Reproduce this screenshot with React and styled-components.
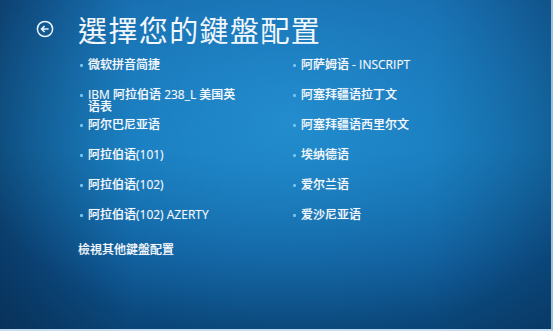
import styled, { createGlobalStyle } from 'styled-components';

const GlobalStyle = createGlobalStyle`
  html, body {
    margin: 0;
    padding: 0;
    background: #0c4a7c;
  }
  * {
    box-sizing: border-box;
  }
`;

const leftItems = [
  '微软拼音简捷',
  'IBM 阿拉伯语 238_L 美国英语表',
  '阿尔巴尼亚语',
  '阿拉伯语(101)',
  '阿拉伯语(102)',
  '阿拉伯语(102) AZERTY',
];

const rightItems = [
  '阿萨姆语 - INSCRIPT',
  '阿塞拜疆语拉丁文',
  '阿塞拜疆语西里尔文',
  '埃纳德语',
  '爱尔兰语',
  '爱沙尼亚语',
];

const App = () => {
  return (
    <>
      <GlobalStyle />
      <Screen>
        <Header>
          <BackButton aria-label="返回">
            <svg width="18" height="18" viewBox="0 0 18 18">
              <circle cx="9" cy="9" r="7.6" fill="none" stroke="#e8f2fa" strokeWidth="1.5" />
              <path d="M12.6 9 H5.6 M8.6 6 L5.6 9 L8.6 12" fill="none" stroke="#e8f2fa" strokeWidth="1.7" />
            </svg>
          </BackButton>
          <Title>選擇您的鍵盤配置</Title>
        </Header>
        <Columns>
          <Column>
            {leftItems.map((item) => (
              <Item key={item}>
                <Bullet />
                <span>{item}</span>
              </Item>
            ))}
          </Column>
          <Column>
            {rightItems.map((item) => (
              <Item key={item}>
                <Bullet />
                <span>{item}</span>
              </Item>
            ))}
          </Column>
        </Columns>
        <MoreLink>檢視其他鍵盤配置</MoreLink>
      </Screen>
    </>
  );
};

const Screen = styled.div`
  width: 553px;
  height: 331px;
  overflow: hidden;
  padding: 14px 0 0 36px;
  color: #f4f8fc;
  font-family: 'Open Sans', 'Noto Sans CJK SC', sans-serif;
  border-right: 2px solid #9fc3db;
  border-bottom: 2px solid #c7def0;
  background:
    radial-gradient(ellipse 330px 220px at 290px 120px, rgba(40, 150, 215, 0.75), rgba(40, 150, 215, 0) 100%),
    linear-gradient(90deg, rgba(6, 30, 60, 0.5) 0%, rgba(6, 30, 60, 0) 24%, rgba(6, 30, 60, 0) 78%, rgba(6, 30, 60, 0.3) 100%),
    linear-gradient(180deg, #1466a8 0%, #1272b4 45%, #0d5592 80%, #0a4577 100%);
`;

const Header = styled.div`
  display: flex;
  align-items: center;
  gap: 24px;
  height: 30px;
`;

const BackButton = styled.div`
  display: flex;
  width: 18px;
  height: 18px;
`;

const Title = styled.h1`
  margin: 0;
  font-family: 'Noto Sans CJK TC', 'Noto Sans', sans-serif;
  font-size: 29px;
  font-weight: 400;
  letter-spacing: 1.4px;
  line-height: 30px;
  color: #f2f7fc;
`;

const Columns = styled.div`
  display: grid;
  grid-template-columns: 213px 200px;
  margin: 15px 0 0 42px;
`;

const Column = styled.div`
  display: grid;
  grid-auto-rows: 30px;
`;

const Item = styled.div`
  display: flex;
  align-items: flex-start;
  gap: 5px;
  font-size: 12px;
  line-height: 12px;
  font-weight: 500;
  padding-right: 50px;
  text-shadow: 0 0 1px rgba(255, 255, 255, 0.4);
`;

const Bullet = styled.i`
  flex: none;
  width: 3px;
  height: 3px;
  margin: 5px 0 0 2px;
  background: #6fc3f0;
  border-radius: 1px;
`;

const MoreLink = styled.div`
  margin: 4px 0 0 42px;
  font-family: 'Noto Sans CJK TC', 'Noto Sans', sans-serif;
  font-size: 12px;
  line-height: 12px;
  font-weight: 500;
  text-shadow: 0 0 1px rgba(255, 255, 255, 0.4);
`;

export default App;
